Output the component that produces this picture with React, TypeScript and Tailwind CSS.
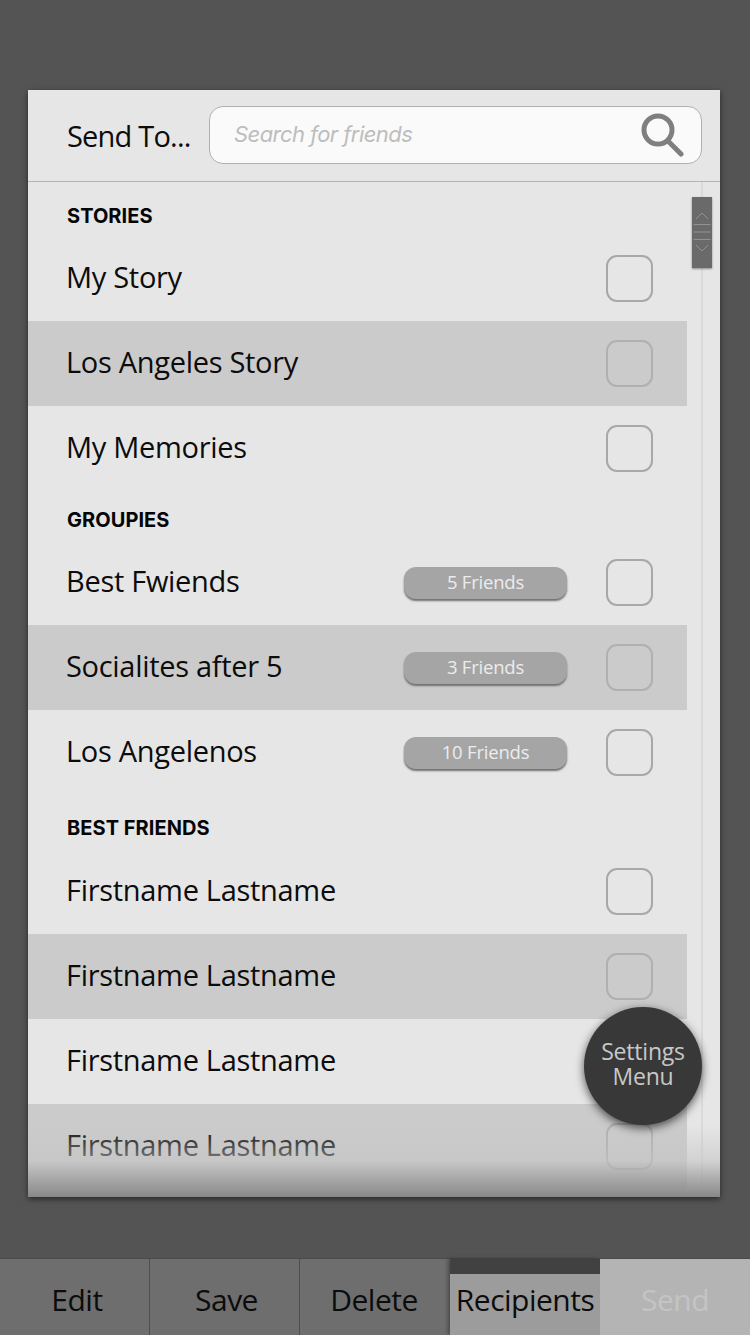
const font = "font-['Open_Sans','Noto_Sans',sans-serif]";

interface RowProps {
  name: string;
  shaded: boolean;
  badge?: string;
}

function Row({ name, shaded, badge }: RowProps) {
  return (
    <div className={`flex h-[85px] items-center pl-[38px] pr-[34px] ${shaded ? 'bg-[#cbcbcb]' : ''}`}>
      <span className="flex-1 pb-[4px] text-[29px] tracking-[-0.3px] text-[#0c0c0c]">{name}</span>
      {badge && (
        <span className="mr-[39px] mt-[1px] flex h-[32px] w-[163px] items-center justify-center rounded-[12px] bg-[#a5a5a5] pb-[2px] text-[18.5px] tracking-[-0.2px] text-[#ececec] shadow-[0_2px_2px_#707070]">
          {badge}
        </span>
      )}
      <span className={`h-[47px] w-[47px] rounded-[11px] border-2 ${shaded ? 'border-[#b0b0b0]' : 'border-[#a8a8a8]'}`} />
    </div>
  );
}

function Heading({ label, className }: { label: string; className: string }) {
  return (
    <div className={`flex items-center pl-[39px] font-['Inter','Liberation_Sans',sans-serif] text-[20px] font-bold tracking-[0.05px] text-[#050505] ${className}`}>
      {label}
    </div>
  );
}

function Tab({ label, className, active }: { label: string; className: string; active?: boolean }) {
  return (
    <div className={`relative flex w-[150px] shrink-0 items-center justify-center pt-[4px] text-[30px] tracking-[-0.5px] ${className}`}>
      {active && <div className="absolute inset-x-0 top-0 h-[15px] bg-[#414141]" />}
      {label}
    </div>
  );
}

export default function App() {
  return (
    <div className={`flex h-[1335px] w-[750px] flex-col overflow-hidden bg-[#545454] ${font}`}>
      <div className="flex-1 pl-[28px] pr-[30px] pt-[90px]">
        <div className="relative h-[1107px] overflow-hidden bg-[#e6e6e6] shadow-[0_2px_6px_rgba(0,0,0,0.55)]">
          <div className="flex h-[92px] items-center border-b border-[#b4b4b4] pl-[39px] pr-[18px]">
            <span className="w-[142px] text-[29px] tracking-[-0.8px] text-[#0c0c0c]">Send To...</span>
            <div className="mb-[2px] flex h-[58px] flex-1 items-center justify-between rounded-[14px] border border-[#b0b0b0] bg-[#fafafa] pl-[24px] pr-[17px]">
              <span className="font-['Inter','Liberation_Sans',sans-serif] text-[22px] italic tracking-[-0.55px] text-[#bdbdbd]">
                Search for friends
              </span>
              <svg width="44" height="44" viewBox="0 0 44 44" fill="none" stroke="#7f7f7f" strokeLinecap="round">
                <circle cx="18" cy="17" r="14" strokeWidth="5" />
                <path d="M28 28 L41 41" strokeWidth="5" />
              </svg>
            </div>
          </div>

          <div className="w-[659px]">
            <Heading label="STORIES" className="h-[54px] pt-[14px]" />
            <Row name="My Story" shaded={false} />
            <Row name="Los Angeles Story" shaded />
            <Row name="My Memories" shaded={false} />
            <Heading label="GROUPIES" className="h-[49px] pt-[9px]" />
            <Row name="Best Fwiends" shaded={false} badge="5 Friends" />
            <Row name="Socialites after 5" shaded badge="3 Friends" />
            <Row name="Los Angelenos" shaded={false} badge="10 Friends" />
            <Heading label="BEST FRIENDS" className="h-[54px] pt-[11px]" />
            <Row name="Firstname Lastname" shaded={false} />
            <Row name="Firstname Lastname" shaded />
            <Row name="Firstname Lastname" shaded={false} />
            <Row name="Firstname Lastname" shaded />
          </div>

          {/* scrollbar */}
          <div className="absolute bottom-0 left-[673px] top-[92px] w-[2px] bg-[#dadada]" />
          <div className="absolute left-[664px] top-[107px] h-[71px] w-[20px] bg-[#6a6a6a] shadow-[0_1px_2px_rgba(0,0,0,0.4)]">
            <svg width="20" height="71" viewBox="0 0 20 71" fill="none" stroke="#929292" strokeWidth="1">
              <path d="M4 22 L10 16 L16 22" />
              <path d="M1.5 27.5 H18.5 M1.5 35 H18.5 M1.5 42.5 H18.5" />
              <path d="M4 48 L10 54 L16 48" />
            </svg>
          </div>

          {/* fade at the bottom */}
          <div className="absolute inset-x-0 bottom-0 h-[72px] bg-gradient-to-b from-[#cbcbcb00] via-[#c4c4c499] to-[#888888]" />

          <div className="absolute left-[556px] top-[917px] flex h-[118px] w-[118px] items-center justify-center rounded-full bg-[#383838] pb-[4px] text-center text-[23px] leading-[25px] tracking-[-0.2px] text-[#c8c8c8] shadow-[0_3px_10px_rgba(0,0,0,0.65)]">
            Settings
            <br />
            Menu
          </div>
        </div>
      </div>

      <div className="flex h-[77px] border-t border-[#4a4a4a]">
        <Tab label="Edit" className="border-r border-[#4e4e4e] bg-[#6e6e6e] pl-[5px] text-[#0c0c0c]" />
        <Tab label="Save" className="border-r border-[#4e4e4e] bg-[#6e6e6e] pl-[4px] text-[#0c0c0c]" />
        <Tab label="Delete" className="bg-[#6e6e6e] pr-[2px] text-[#0c0c0c]" />
        <Tab label="Recipients" active className="bg-[#9c9c9c] text-[#0c0c0c] shadow-[-2px_0_4px_rgba(0,0,0,0.35)]" />
        <Tab label="Send" className="bg-[#b4b4b4] text-[#c4c4c4]" />
      </div>
    </div>
  );
}
